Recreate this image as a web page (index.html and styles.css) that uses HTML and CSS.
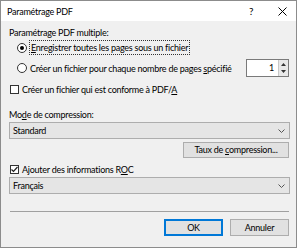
FILE: index.html
```html
<!DOCTYPE html>
<html lang="fr">
<head>
  <meta charset="UTF-8">
  <title>Paramétrage PDF</title>
  <link rel="stylesheet" href="styles.css">
</head>
<body>
  <div class="dialog">
    <!-- Title bar -->
    <div class="titlebar">
      <span class="title">Paramétrage PDF</span>
      <span class="help">?</span>
      <span class="close">
        <svg width="9" height="9" viewBox="0 0 9 9"><path d="M0.5 0.5 L8.5 8.5 M8.5 0.5 L0.5 8.5" stroke="#000" stroke-width="1" fill="none"/></svg>
      </span>
    </div>

    <div class="content">
      <div class="label">Paramétrage PDF multiple:</div>

      <div class="radio-row first">
        <span class="radio checked"></span>
        <span class="focus"><u>E</u>nregistrer toutes les pages sous un fichier</span>
      </div>

      <div class="radio-row second">
        <span class="radio"></span>
        <span class="grow">Créer un fichier pour chaque nombre de pages <u>s</u>pécifié</span>
        <div class="spinner">
          <span class="spin-value">1</span>
          <span class="spin-buttons">
            <svg width="9" height="16" viewBox="0 0 9 16"><path d="M2 6 L4.5 3 L7 6 Z M2 10 L4.5 13 L7 10 Z" fill="#333"/></svg>
          </span>
        </div>
      </div>

      <div class="check-row pdfa">
        <span class="check"></span>
        <span>Créer un fichier qui est conforme à PDF/<u>A</u></span>
      </div>

      <div class="label mode">Mo<u>d</u>e de compression:</div>
      <div class="select">
        <span>Standard</span>
        <svg width="7" height="4" viewBox="0 0 7 4"><path d="M0.5 0.5 L3.5 3.5 L6.5 0.5" stroke="#555" fill="none"/></svg>
      </div>

      <div class="button-row">
        <button class="btn rate">Taux de <u>c</u>ompression...</button>
      </div>

      <div class="check-row roc">
        <span class="check checked">
          <svg width="9" height="9" viewBox="0 0 9 9"><path d="M1.5 4.5 L3.5 6.5 L7.5 2" stroke="#222" stroke-width="1.2" fill="none"/></svg>
        </span>
        <span>Ajouter des informations R<u>O</u>C</span>
      </div>

      <div class="select lang">
        <span>Français</span>
        <svg width="7" height="4" viewBox="0 0 7 4"><path d="M0.5 0.5 L3.5 3.5 L6.5 0.5" stroke="#555" fill="none"/></svg>
      </div>

      <div class="separator"></div>

      <div class="footer">
        <button class="btn default">OK</button>
        <button class="btn">Annuler</button>
      </div>
    </div>
  </div>
</body>
</html>
```

FILE: styles.css
```css
/* General */
* {
  box-sizing: border-box;
}

body {
  margin: 0;
  background: #fff;
  font-family: Lato, "Noto Sans", sans-serif;
  font-size: 9px;
  letter-spacing: -0.25px;
  color: #000;
}

u {
  text-underline-offset: 1px;
}

.dialog {
  width: 297px;
  height: 248px;
  border: 1px solid #8c8c8c;
  background: #f0f0f0;
  display: flex;
  flex-direction: column;
}

/* Title bar */
.titlebar {
  height: 20px;
  background: #fff;
  display: flex;
  align-items: center;
  padding-left: 6px;
}

.title {
  flex: 1;
}

.help {
  width: 29px;
  font-size: 10px;
}

.close {
  width: 9px;
  display: flex;
  align-items: center;
  margin-right: 9px;
}

/* Content */
.content {
  flex: 1;
  display: flex;
  flex-direction: column;
  padding: 5px 6px 0 8px;
}

.label {
  height: 14px;
  line-height: 14px;
}

.label.mode {
  margin-top: 12px;
}

.radio-row {
  display: flex;
  align-items: center;
  padding-left: 8px;
}

.radio-row.first {
  height: 15px;
}

.radio-row.second {
  margin-top: 4px;
  height: 18px;
}

.radio {
  width: 10px;
  height: 10px;
  border: 1px solid #333;
  border-radius: 50%;
  background: #fff;
  margin-right: 2px;
  flex: none;
  position: relative;
}

.radio.checked::after {
  content: "";
  position: absolute;
  left: 2px;
  top: 2px;
  width: 4px;
  height: 4px;
  border-radius: 50%;
  background: #000;
}

.focus {
  border: 1px dotted #333;
  padding: 0 1px;
  line-height: 13px;
}

.grow {
  flex: 1;
  padding-left: 1px;
}

/* Spinner */
.spinner {
  width: 43px;
  height: 18px;
  display: flex;
  margin-right: 1px;
  border: 1px solid #7a7a7a;
  background: #fff;
}

.spin-value {
  flex: 1;
  text-align: right;
  padding-right: 4px;
  line-height: 16px;
}

.spin-buttons {
  width: 10px;
  background: #e8e8e8;
  border-left: 1px solid #c8c8c8;
  display: flex;
  align-items: center;
}

/* Checkboxes */
.check-row {
  display: flex;
  align-items: center;
  height: 14px;
  padding-left: 1px;
}

.check-row.pdfa {
  margin-top: 5px;
}

.check-row.roc {
  margin-top: 4px;
}

.check {
  width: 9px;
  height: 9px;
  border: 1px solid #333;
  background: #fff;
  margin-right: 3px;
  flex: none;
  display: flex;
  align-items: center;
  justify-content: center;
}

.check svg {
  margin: -1px;
}

/* Combo boxes */
.select {
  height: 17px;
  border: 1px solid #adadad;
  background: #e5e5e5;
  display: flex;
  align-items: center;
  justify-content: space-between;
  padding: 0 4px 0 3px;
}

.select.lang {
  margin-top: 1px;
}

/* Buttons */
.button-row {
  display: flex;
  justify-content: flex-end;
  margin-top: 3px;
  padding-right: 1px;
}

.btn {
  font-family: inherit;
  font-size: 9px;
  letter-spacing: -0.25px;
  height: 16px;
  padding: 0;
  border: 1px solid #adadad;
  background: #e1e1e1;
  color: #000;
  line-height: 12px;
}

.btn.rate {
  width: 106px;
}

.separator {
  margin: 17px 1px 0 1px;
  height: 1px;
  background: #a0a0a0;
}

.footer {
  display: flex;
  justify-content: flex-end;
  gap: 7px;
  margin-top: 7px;
  padding-right: 1px;
}

.footer .btn {
  width: 59px;
  height: 17px;
}

.footer .btn.default {
  border: 2px solid #0078d7;
}
```
